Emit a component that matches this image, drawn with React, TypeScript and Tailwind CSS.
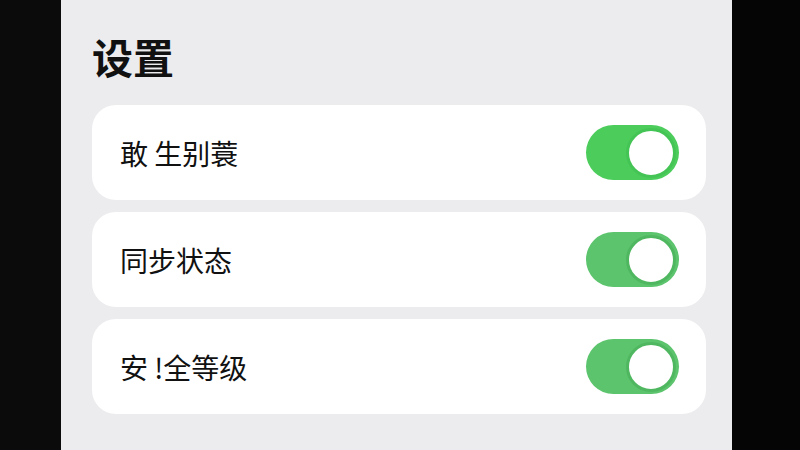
const rows = [
  { label: '敢 生别蓑', color: 'bg-[#4ccd5b]', ring: 'border-[#44c454]' },
  { label: '同步状态', color: 'bg-[#5bc46c]', ring: 'border-[#4fb760]' },
  { label: '安 !全等级', color: 'bg-[#5bc46c]', ring: 'border-[#4fb760]' },
];

function Toggle({ color, ring }: { color: string; ring: string }) {
  return (
    <div className={`flex h-[55px] w-[93px] items-center justify-end rounded-full ${color} p-[3px]`}>
      <div className={`h-[50px] w-[50px] rounded-full border-[3px] ${ring} bg-white`} />
    </div>
  );
}

export default function App() {
  return (
    <div
      className="flex h-[450px] w-[800px] overflow-hidden bg-black"
      style={{ fontFamily: '"Noto Sans CJK SC", "Noto Sans", sans-serif' }}
    >
      <div className="w-[61px] bg-[#0b0b0b]" />
      <div className="flex flex-1 flex-col bg-[#ececee] pl-[31px] pr-[26px] pt-[28px]">
        <h1 className="text-[41px] font-bold leading-[56px] text-[#111]">设置</h1>
        <div className="mt-[21px] flex flex-col gap-[12px]">
          {rows.map((r) => (
            <div
              key={r.label}
              className="flex h-[95px] items-center justify-between rounded-[24px] bg-white pl-[28px] pr-[27px]"
            >
              <span className="text-[28px] text-[#111]">{r.label}</span>
              <Toggle color={r.color} ring={r.ring} />
            </div>
          ))}
        </div>
      </div>
      <div className="w-[68px] bg-[#050505]" />
    </div>
  );
}
